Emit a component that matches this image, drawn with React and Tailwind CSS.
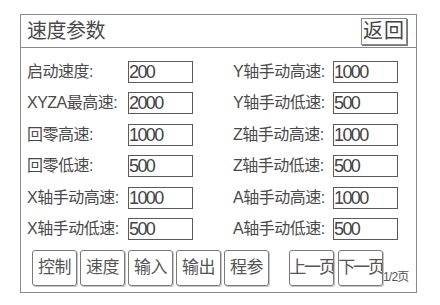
import React from 'react';

const LEFT = [
  { label: '启动速度:', value: '200' },
  { label: 'XYZA最高速:', value: '2000' },
  { label: '回零高速:', value: '1000' },
  { label: '回零低速:', value: '500' },
  { label: 'X轴手动高速:', value: '1000' },
  { label: 'X轴手动低速:', value: '500' },
];

const RIGHT = [
  { label: 'Y轴手动高速:', value: '1000' },
  { label: 'Y轴手动低速:', value: '500' },
  { label: 'Z轴手动高速:', value: '1000' },
  { label: 'Z轴手动低速:', value: '500' },
  { label: 'A轴手动高速:', value: '1000' },
  { label: 'A轴手动低速:', value: '500' },
];

const TABS = ['控制', '速度', '输入', '输出', '程参'];

const font = { fontFamily: '"Liberation Sans", "Noto Sans CJK SC", sans-serif' };

function Field({ label, value, labelW }) {
  return (
    <div className="flex items-center h-[22px]">
      <span className={`${labelW} text-[16px] tracking-[-0.5px] text-[#4a4a4a] whitespace-nowrap leading-none`}>
        {label}
      </span>
      <div className="w-[65px] h-[22px] border border-[#5a5a5a] flex items-center text-[18px] tracking-[-1.6px] text-[#444] leading-none">
        {value}
      </div>
    </div>
  );
}

function Btn({ children, className = '' }) {
  return (
    <div
      className={`w-[45px] h-[36px] border border-[#7a7a7a] rounded-[3px] shadow-[1px_1px_0_#c4c4c4] flex items-center justify-center text-[17px] text-[#555] leading-none whitespace-nowrap overflow-hidden ${className}`}
    >
      {children}
    </div>
  );
}

export default function App() {
  return (
    <div className="w-[440px] h-[305px] bg-white pt-[14px] pl-[20px]" style={font}>
      <div className="w-[397px] h-[279px] border border-[#8a8a8a] flex flex-col">
        <div className="h-[33px] border-b border-[#8a8a8a] flex items-center justify-between pl-[6px] pr-[9px]">
          <span className="text-[20px] tracking-[-0.5px] text-[#4a4a4a] leading-none">速度参数</span>
          <div className="w-[46px] h-[27px] border border-[#8a8a8a] shadow-[1px_1px_0_#777] flex items-center justify-center text-[20px] tracking-[1px] text-[#444] leading-none">
            返回
          </div>
        </div>

        <div className="pt-[13px] pl-[6px]">
          <div className="grid grid-cols-[206px_1fr] gap-y-[9.4px]">
            {LEFT.map((l, i) => (
              <React.Fragment key={i}>
                <Field label={l.label} value={l.value} labelW="w-[101px]" />
                <Field label={RIGHT[i].label} value={RIGHT[i].value} labelW="w-[100px]" />
              </React.Fragment>
            ))}
          </div>

          <div className="flex items-end mt-[10px] ml-[5px]">
            <div className="flex gap-[3px]">
              {TABS.map(t => (
                <Btn key={t} className="tracking-[-0.5px]">{t}</Btn>
              ))}
            </div>
            <div className="flex gap-[4px] ml-[20px]">
              <Btn className="tracking-[-2.2px]">上一页</Btn>
              <Btn className="tracking-[-2.2px]">下一页</Btn>
            </div>
            <span className="text-[12px] tracking-[-0.8px] text-[#555] leading-none mb-[3px]">1/2页</span>
          </div>
        </div>
      </div>
    </div>
  );
}
